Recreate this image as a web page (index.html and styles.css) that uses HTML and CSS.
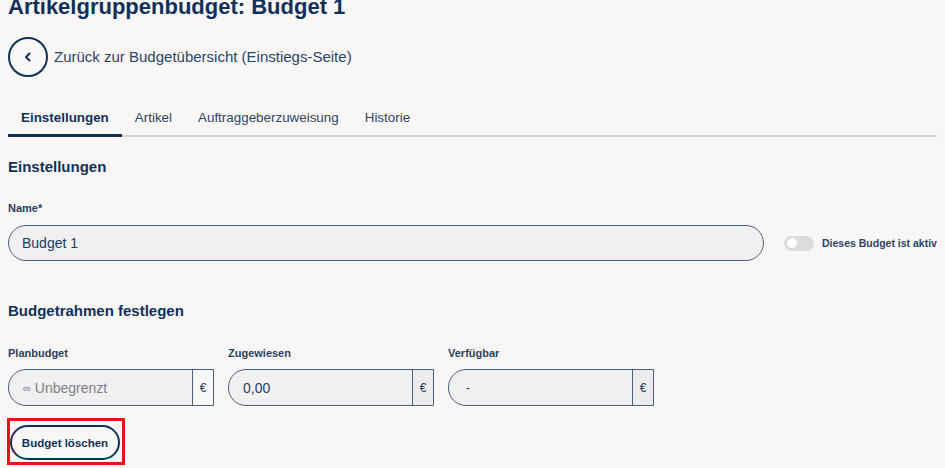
FILE: index.html
```html
<!DOCTYPE html>
<html lang="de">
<head>
<meta charset="utf-8">
<title>Artikelgruppenbudget: Budget 1</title>
<link rel="stylesheet" href="styles.css">
</head>
<body>
<main class="page">
  <h1 class="title">Artikelgruppenbudget: Budget 1</h1>

  <a class="back" href="#">
    <span class="back-circle">
      <svg width="12" height="12" viewBox="0 0 12 12"><path d="M7.5 2.5 L4 6 L7.5 9.5" fill="none" stroke="#13305b" stroke-width="2" stroke-linecap="round" stroke-linejoin="round"/></svg>
    </span>
    <span class="back-text">Zurück zur Budgetübersicht (Einstiegs-Seite)</span>
  </a>

  <nav class="tabs">
    <a class="tab active" href="#">Einstellungen</a>
    <a class="tab" href="#">Artikel</a>
    <a class="tab" href="#">Auftraggeberzuweisung</a>
    <a class="tab" href="#">Historie</a>
  </nav>

  <h2 class="section section-first">Einstellungen</h2>
  <div class="label label-name">Name*</div>
  <div class="name-row">
    <div class="input name-input">Budget 1</div>
    <div class="toggle"><span class="knob"></span></div>
    <span class="toggle-label">Dieses Budget ist aktiv</span>
  </div>

  <h2 class="section section-second">Budgetrahmen festlegen</h2>
  <div class="money-grid">
    <div class="field">
      <div class="label">Planbudget</div>
      <div class="money">
        <div class="money-value placeholder"><span class="inf">∞</span> Unbegrenzt</div>
        <div class="addon addon-light">€</div>
      </div>
    </div>
    <div class="field">
      <div class="label">Zugewiesen</div>
      <div class="money">
        <div class="money-value">0,00</div>
        <div class="addon">€</div>
      </div>
    </div>
    <div class="field">
      <div class="label">Verfügbar</div>
      <div class="money">
        <div class="money-value dash">-</div>
        <div class="addon">€</div>
      </div>
    </div>
  </div>

  <div class="highlight">
    <button class="btn-delete" type="button">Budget löschen</button>
  </div>
</main>
</body>
</html>
```

FILE: styles.css
```css
* { box-sizing: border-box; }

html, body {
  margin: 0;
  padding: 0;
  background: #f8f7f5;
  height: 100%;
  overflow: hidden;
}

body {
  font-family: "Liberation Sans", Arial, sans-serif;
  color: #13305b;
}

.page {
  padding: 0 8px;
}

.title {
  margin: -5px 0 0;
  font-size: 22px;
  line-height: 24px;
  font-weight: 700;
  color: #13305b;
}

.back {
  margin-top: 18px;
  display: flex;
  align-items: center;
  gap: 6px;
  text-decoration: none;
  color: #2a4468;
}

.back-circle {
  width: 40px;
  height: 40px;
  border: 2px solid #13305b;
  border-radius: 50%;
  display: flex;
  align-items: center;
  justify-content: center;
}

.back-text {
  font-size: 15px;
  line-height: 18px;
}

.tabs {
  margin-top: 23px;
  display: flex;
  border-bottom: 2px solid #d5d5d3;
}

.tab {
  padding: 9px 13px 8px;
  font-size: 13.4px;
  line-height: 17px;
  color: #2e4466;
  text-decoration: none;
  border-bottom: 3px solid transparent;
  margin-bottom: -2px;
}

.tab.active {
  font-weight: 700;
  color: #13305b;
  border-bottom-color: #13305b;
}

.section {
  margin: 0;
  font-size: 15px;
  line-height: 18px;
  font-weight: 700;
  color: #13305b;
}

.section-first { margin-top: 21px; }
.section-second { margin-top: 41px; }

.label {
  font-size: 11px;
  line-height: 14px;
  font-weight: 700;
  color: #2b3f5c;
}

.label-name { margin-top: 25px; }

.name-row {
  margin-top: 10px;
  display: flex;
  align-items: center;
}

.input {
  height: 36px;
  border: 1px solid #4b6080;
  border-radius: 18px;
  background: #f0f0f0;
  display: flex;
  align-items: center;
  padding-left: 13px;
  font-size: 14px;
  color: #1f3a5f;
}

.name-input {
  width: 756px;
  flex-shrink: 0;
}

.toggle {
  flex-shrink: 0;
  margin-left: 20px;
  width: 30px;
  height: 15px;
  border-radius: 8px;
  background: #dcdcdc;
  display: flex;
  align-items: center;
  padding-left: 3px;
}

.knob {
  width: 10px;
  height: 10px;
  border-radius: 50%;
  background: #ffffff;
}

.toggle-label {
  margin-left: 8px;
  font-size: 10.5px;
  font-weight: 700;
  white-space: nowrap;
  color: #2b4468;
}

.money-grid {
  margin-top: 26px;
  display: grid;
  grid-template-columns: 206px 206px 206px;
  column-gap: 14px;
}

.money {
  margin-top: 9px;
  height: 37px;
  display: flex;
  border: 1px solid #4b6080;
  border-radius: 18px 0 0 18px;
  background: #f0f0f0;
  overflow: hidden;
}

.money-value {
  flex: 1;
  display: flex;
  align-items: center;
  padding-left: 14px;
  font-size: 14px;
  color: #2a3f5c;
}

.money-value.placeholder {
  color: #7b8089;
}

.inf {
  font-size: 11px;
  margin-right: 4px;
}

.money-value.dash {
  padding-left: 17px;
  font-size: 12px;
}

.addon {
  width: 21px;
  border-left: 1px solid #4b6080;
  background: #ececec;
  display: flex;
  align-items: center;
  justify-content: center;
  font-size: 12px;
  color: #2a3f5c;
}

.addon-light {
  background: #f8f8f8;
}

.highlight {
  margin-top: 12px;
  margin-left: -1px;
  display: inline-block;
  border: 3px solid #e3141b;
  padding: 4px 2px 2px 0;
}

.btn-delete {
  display: block;
  width: 110px;
  height: 35px;
  border: 2px solid #13305b;
  border-radius: 18px;
  background: #f8f7f5;
  font-family: "Liberation Sans", Arial, sans-serif;
  font-size: 11.5px;
  font-weight: 700;
  color: #13305b;
  padding: 0;
}
```
